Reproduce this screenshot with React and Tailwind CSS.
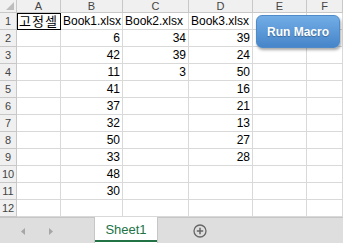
import React from "react";

const cols = [
  { k: "A", w: "w-[44px]" },
  { k: "B", w: "w-[62px]" },
  { k: "C", w: "w-[66px]" },
  { k: "D", w: "w-[64px]" },
  { k: "E", w: "w-[54px]" },
  { k: "F", w: "w-[36px]" },
];

const data = [
  ["고정셀", "Book1.xlsx", "Book2.xlsx", "Book3.xlsx", "", ""],
  ["", "6", "34", "39", "", ""],
  ["", "42", "39", "24", "", ""],
  ["", "11", "3", "50", "", ""],
  ["", "41", "", "16", "", ""],
  ["", "37", "", "21", "", ""],
  ["", "32", "", "13", "", ""],
  ["", "50", "", "27", "", ""],
  ["", "33", "", "28", "", ""],
  ["", "48", "", "", "", ""],
  ["", "30", "", "", "", ""],
  ["", "", "", "", "", ""],
];

export default function App() {
  return (
    <div
      className="relative w-[343px] h-[243px] overflow-hidden bg-white text-[12px] text-black"
      style={{ fontFamily: '"Liberation Sans", "Noto Sans CJK KR", sans-serif' }}
    >
      {/* header row */}
      <div className="flex h-[13px]">
        <div className="relative w-[17px] h-[13px] bg-[#f0f0f0] border-r border-b border-[#c8c8c8]">
          <div className="absolute right-[2px] bottom-[2px] w-0 h-0 border-l-[8px] border-l-transparent border-b-[8px] border-b-[#bdbdbd]" />
        </div>
        {cols.map((c) => (
          <div
            key={c.k}
            className={`${c.w} h-[13px] bg-[#f0f0f0] border-r border-b border-[#c8c8c8] flex items-center justify-center text-[11px] leading-none text-[#444]`}
          >
            {c.k}
          </div>
        ))}
      </div>
      {data.map((row, r) => (
        <div key={r} className="flex h-[17px]">
          <div className="w-[17px] h-[17px] bg-[#f0f0f0] border-r border-b border-[#c8c8c8] flex items-center justify-center text-[11px] leading-none text-[#444]">
            {r + 1}
          </div>
          {row.map((v, ci) => {
            const isNum = v !== "" && /^\d+$/.test(v);
            const sel = r === 0 && ci === 0;
            return (
              <div
                key={ci}
                className={`${cols[ci].w} h-[17px] border-r border-b border-[#d9d9d9] flex items-center leading-none whitespace-nowrap overflow-visible ${
                  isNum ? "justify-end pr-[2px]" : "justify-start pl-[2px]"
                } ${sel ? "outline outline-1 outline-black -outline-offset-1 justify-center pl-0 text-[13px] tracking-[1px]" : ""}`}
              >
                {v}
              </div>
            );
          })}
        </div>
      ))}

      {/* sheet tab bar */}
      <div className="flex h-[26px] bg-[#dedede] border-t border-[#c6c6c6]">
        <div className="w-[94px] flex items-center">
          <svg width="94" height="25" viewBox="0 0 94 25">
            <polygon points="25,10 21,13.5 25,17" fill="#a6a6a6" />
            <polygon points="49,10 53,13.5 49,17" fill="#a6a6a6" />
          </svg>
        </div>
        <div className="relative w-[64px] h-[26px] -mt-px bg-white border-l border-r border-[#c6c6c6] flex items-center justify-center text-[13px] text-[#217346]">
          Sheet1
          <div className="absolute left-0 right-0 bottom-[1px] h-[2px] bg-[#217346]" />
        </div>
        <div className="flex-1 flex items-center pl-[35px]">
          <svg width="14" height="14" viewBox="0 0 14 14">
            <circle cx="7" cy="7" r="6" fill="none" stroke="#666" strokeWidth="1.3" />
            <line x1="7" y1="3.8" x2="7" y2="10.2" stroke="#666" strokeWidth="1.5" />
            <line x1="3.8" y1="7" x2="10.2" y2="7" stroke="#666" strokeWidth="1.5" />
          </svg>
        </div>
      </div>

      {/* Run Macro button */}
      <div className="absolute left-[256px] top-[15px] w-[84px] h-[33px] rounded-[6px] bg-gradient-to-b from-[#72ade6] to-[#4685c9] border border-[#4f8bc8] shadow-[1px_2px_3px_rgba(0,0,0,0.35)] flex items-center justify-center text-white font-bold text-[12px] [text-shadow:0_1px_1px_rgba(0,0,0,0.3)]">
        Run Macro
      </div>
    </div>
  );
}
